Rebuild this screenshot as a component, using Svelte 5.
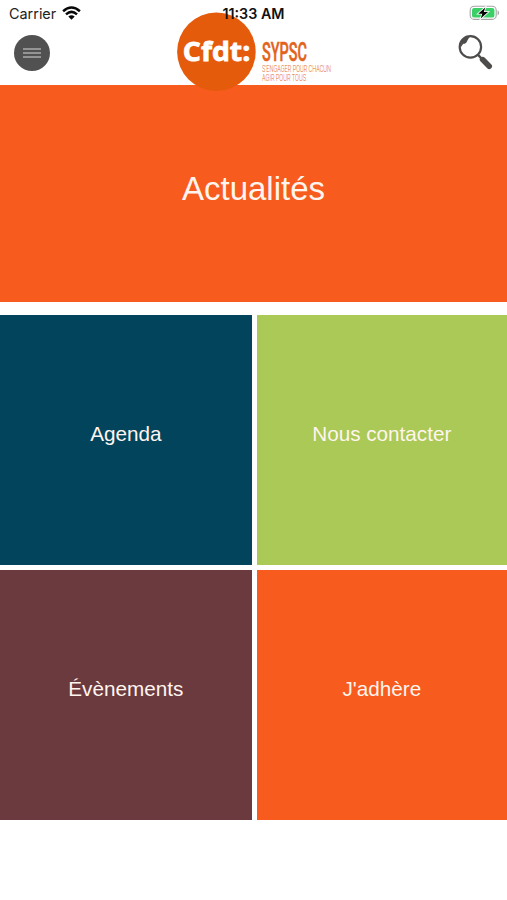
<script>
  const tiles = [
    { label: 'Agenda', tone: 'navy' },
    { label: 'Nous contacter', tone: 'green' },
    { label: 'Évènements', tone: 'plum' },
    { label: "J'adhère", tone: 'orange' }
  ];
</script>

<div class="screen">
  <header>
    <div class="status">
      <div class="carrier">
        <span>Carrier</span>
        <svg width="19" height="14" viewBox="0 0 19 14" aria-hidden="true">
          <g fill="none" stroke="#080808" stroke-width="2.5">
            <path d="M1.1 5.2 Q9.5 -2.2 17.9 5.2" />
            <path d="M4 8.4 Q9.5 3.4 15 8.4" />
          </g>
          <path d="M6.3 10.6 Q9.5 7.9 12.7 10.6 L9.5 13.8Z" fill="#080808" />
        </svg>
      </div>
      <svg class="battery" width="32" height="16" viewBox="0 0 32 16" aria-hidden="true">
        <rect x="1.2" y="1.2" width="26" height="13.2" rx="4" fill="#fff" stroke="#a5a5a5" stroke-width="1.1" />
        <rect x="3" y="3" width="22.4" height="9.6" rx="2.2" fill="#3bcf67" />
        <path d="M28.6 5 Q31.6 7.8 28.6 10.6Z" fill="#a5a5a5" />
        <path d="M16.3 2.4 L9.2 8.8 H13.3 L11.7 13.6 L19 7 H14.8Z" fill="#050505" stroke="#fff" stroke-width="1.6" paint-order="stroke" />
      </svg>
    </div>

    <div class="bar">
      <button class="menu" aria-label="Menu">
        <span></span><span></span><span></span>
      </button>
      <button class="search" aria-label="Rechercher">
        <svg width="38" height="38" viewBox="0 0 38 38">
          <circle cx="13.4" cy="12.9" r="10.7" fill="none" stroke="#4e4b4b" stroke-width="2.2" />
          <path d="M3.6 14 Q3 4 12.8 2.6 L10.4 6.4 Q9.4 9.8 6.4 9.8 Q4.8 11 3.6 14Z" fill="#4e4b4b" />
          <path d="M20.8 20.6 L25.5 25.5" stroke="#4e4b4b" stroke-width="2.4" />
          <path d="M25.6 25.6 L32.2 32.2" stroke="#4e4b4b" stroke-width="5.6" stroke-linecap="round" />
        </svg>
      </button>
    </div>

    <svg class="logo" width="180" height="86" viewBox="0 0 180 86" role="img">
      <circle cx="40.4" cy="41.8" r="39.3" fill="#e55b0c" />
      <text class="brand" x="6.8" y="51.2" textLength="67.5" lengthAdjust="spacingAndGlyphs">Cfdt:</text>
      <text class="union" x="86" y="51" textLength="45" lengthAdjust="spacingAndGlyphs">SYPSC</text>
      <text class="motto" x="86" y="61.8" textLength="69" lengthAdjust="spacingAndGlyphs">S'ENGAGER POUR CHACUN</text>
      <text class="motto" x="86" y="71.2" textLength="44" lengthAdjust="spacingAndGlyphs">AGIR POUR TOUS</text>
    </svg>
    <time>11:33 AM</time>
  </header>

  <main>
    <a class="hero" href="#actualites">Actualités</a>
    <div class="tiles">
      {#each tiles as tile}
        <a class="tile {tile.tone}" href="#{tile.tone}">{tile.label}</a>
      {/each}
    </div>
  </main>
</div>

<style>
  :global(body) {
    margin: 0;
    background: #fff;
  }
  .screen {
    width: 507px;
    height: 900px;
    overflow: hidden;
    background: #fff;
    font-family: 'Liberation Sans', Arial, sans-serif;
  }
  header {
    position: relative;
    height: 85px;
  }
  .status {
    display: flex;
    justify-content: space-between;
    align-items: flex-start;
    height: 28px;
    padding: 5px 6px 0 9px;
    box-sizing: border-box;
  }
  .carrier {
    display: flex;
    align-items: center;
    gap: 6px;
    height: 17px;
    font: 14.4px/17px Inter, sans-serif;
    color: #222;
  }
  .carrier svg {
    margin-top: -1px;
  }
  .bar {
    display: flex;
    justify-content: space-between;
    align-items: center;
    height: 50px;
    padding: 0 12px 0 14px;
  }
  button {
    padding: 0;
    border: 0;
    background: none;
  }
  .menu {
    display: flex;
    flex-direction: column;
    align-items: center;
    justify-content: center;
    gap: 2px;
    width: 36px;
    height: 36px;
    border-radius: 50%;
    background: #525151;
  }
  .menu span {
    width: 18px;
    height: 2px;
    background: #959494;
  }
  .search {
    width: 38px;
    height: 38px;
  }
  .search svg {
    display: block;
  }
  .logo {
    position: absolute;
    left: 176px;
    top: 10px;
    z-index: 1;
  }
  time {
    position: absolute;
    left: 0;
    right: 0;
    top: 5px;
    z-index: 2;
    text-align: center;
    font: 600 14.3px/17px Inter, sans-serif;
    color: #111;
  }
  .brand {
    font: 700 27px 'Open Sans', sans-serif;
    fill: #fff;
    stroke: #fff;
    stroke-width: 0.8px;
  }
  .union {
    font: 500 25px Roboto, sans-serif;
    fill: #e2631c;
    stroke: #e2631c;
    stroke-width: 0.5px;
  }
  .motto {
    font: 300 9.2px Roboto, sans-serif;
    fill: #e56a2c;
  }
  a {
    display: flex;
    align-items: center;
    justify-content: center;
    box-sizing: border-box;
    color: #fff5ee;
    text-decoration: none;
  }
  .hero {
    height: 217px;
    padding-bottom: 9px;
    background: #f75b1d;
    font-size: 33px;
  }
  .tiles {
    display: grid;
    grid-template-columns: 251.6px 1fr;
    gap: 5px;
    margin-top: 13px;
  }
  .tile {
    height: 250px;
    padding-bottom: 12px;
    font-size: 20.7px;
  }
  .navy {
    background: #03445d;
  }
  .green {
    background: #aac957;
  }
  .plum {
    background: #6b3a3f;
  }
  .orange {
    background: #f75b1d;
  }
</style>
